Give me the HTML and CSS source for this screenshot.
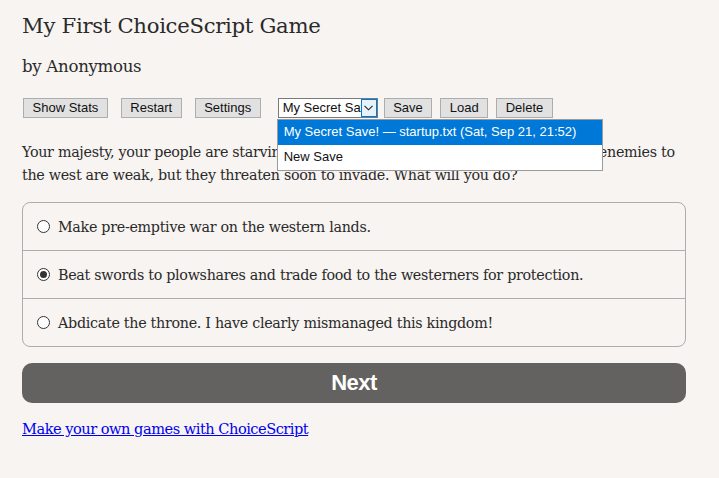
FILE: index.html
```html
<!DOCTYPE html>
<html>
<head>
<meta charset="utf-8">
<link rel="stylesheet" href="styles.css">
</head>
<body>
<div class="page">
  <h1 class="title">My First ChoiceScript Game</h1>
  <h2 class="author">by Anonymous</h2>
  <div class="toolbar">
    <button class="btn gap-l">Show Stats</button>
    <button class="btn gap-l">Restart</button>
    <button class="btn gap-xl">Settings</button>
    <div class="select-wrap gap-s">
      <div class="select">
        <span class="select-text">My Secret Save!</span>
        <span class="select-arrow"><svg width="9" height="6" viewBox="0 0 9 6"><path d="M0.5 0.8 L4.5 4.8 L8.5 0.8" fill="none" stroke="#222" stroke-width="1.1"/></svg></span>
      </div>
      <ul class="dropdown">
        <li class="opt opt-active">My Secret Save! — startup.txt (Sat, Sep 21, 21:52)</li>
        <li class="opt">New Save</li>
      </ul>
    </div>
    <button class="btn gap-m">Save</button>
    <button class="btn gap-m">Load</button>
    <button class="btn">Delete</button>
  </div>
  <p class="story">Your majesty, your people are starving in the streets, and threaten revolution. Our enemies to the west are weak, but they threaten soon to invade. What will you do?</p>
  <div class="choices">
    <label class="choice"><span class="radio"></span>Make pre-emptive war on the western lands.</label>
    <label class="choice"><span class="radio checked"></span>Beat swords to plowshares and trade food to the westerners for protection.</label>
    <label class="choice"><span class="radio"></span>Abdicate the throne. I have clearly mismanaged this kingdom!</label>
  </div>
  <button class="next">Next</button>
  <p class="footer"><a href="#" class="link">Make your own games with ChoiceScript</a></p>
</div>
</body>
</html>
```
FILE: styles.css
```css
html, body {
  margin: 0;
  padding: 0;
  background: #f7f4f1;
}
.page {
  width: 664px;
  margin-left: 22px;
  font-family: "DejaVu Serif", Georgia, serif;
  color: #2a2a2a;
}
.title {
  margin: 0;
  padding-top: 12px;
  font-size: 21.2px;
  font-weight: normal;
  line-height: 28px;
  letter-spacing: -0.3px;
}
.author {
  margin: 0;
  padding-top: 15px;
  font-size: 16.6px;
  font-weight: normal;
  line-height: 24px;
  letter-spacing: -0.3px;
}
.toolbar {
  display: flex;
  align-items: center;
  margin-top: 19px;
  padding-left: 1px;
  height: 20px;
  font-family: "Liberation Sans", Arial, sans-serif;
}
.btn {
  height: 20px;
  padding: 0 8.5px;
  margin: 0;
  font-family: "Liberation Sans", Arial, sans-serif;
  font-size: 13px;
  color: #111;
  background: #e1e1e1;
  border: 1px solid #adadad;
  border-radius: 0;
  line-height: 18px;
}
.gap-l { margin-right: 13px; }
.gap-xl { margin-right: 17px; }
.gap-m { margin-right: 8px; }
.gap-s { margin-right: 6px; }
.select-wrap {
  position: relative;
}
.select {
  display: flex;
  width: 98px;
  height: 18px;
  border: 1px solid #7a7a7a;
  background: #fff;
  font-size: 13px;
  color: #111;
}
.select-text {
  flex: 1;
  overflow: hidden;
  white-space: nowrap;
  padding-left: 4px;
  line-height: 18px;
}
.select-arrow {
  width: 16px;
  height: 18px;
  box-sizing: border-box;
  border: 1px solid #0078d7;
  display: flex;
  align-items: center;
  justify-content: center;
  background: #e5f1fb;
}
.dropdown {
  position: absolute;
  left: -1px;
  top: 21px;
  margin: 0;
  padding: 0;
  list-style: none;
  width: 324px;
  border: 1px solid #9a9a9a;
  background: #fff;
  z-index: 5;
}
.opt {
  height: 25px;
  line-height: 24px;
  padding-left: 6px;
  font-size: 13px;
  color: #111;
  white-space: nowrap;
}
.opt-active {
  background: #0078d7;
  color: #fff;
}
.story {
  margin: 23px 0 0;
  font-size: 14.3px;
  line-height: 23px;
  letter-spacing: -0.3px;
}
.choices {
  margin-top: 15px;
  border: 1px solid #adadad;
  border-radius: 8px;
}
.choice {
  display: flex;
  align-items: center;
  height: 47px;
  padding-left: 14px;
  font-size: 14.3px;
  letter-spacing: -0.3px;
  border-top: 1px solid #adadad;
}
.choice:first-child {
  border-top: none;
}
.radio {
  width: 11px;
  height: 11px;
  border: 1px solid #333;
  border-radius: 50%;
  background: #fff;
  margin-right: 8px;
  box-sizing: content-box;
  display: inline-flex;
  align-items: center;
  justify-content: center;
}
.radio.checked::after {
  content: "";
  width: 7px;
  height: 7px;
  border-radius: 50%;
  background: #333;
}
.next {
  display: block;
  width: 664px;
  height: 40px;
  margin-top: 16px;
  border: none;
  border-radius: 10px;
  background: #646260;
  color: #fff;
  font-family: "Liberation Sans", Arial, sans-serif;
  font-weight: bold;
  font-size: 22px;
  letter-spacing: -0.5px;
}
.footer {
  margin: 16px 0 0;
  font-size: 14.6px;
  line-height: 20px;
  letter-spacing: -0.5px;
}
.link {
  color: #0000ee;
}
```
